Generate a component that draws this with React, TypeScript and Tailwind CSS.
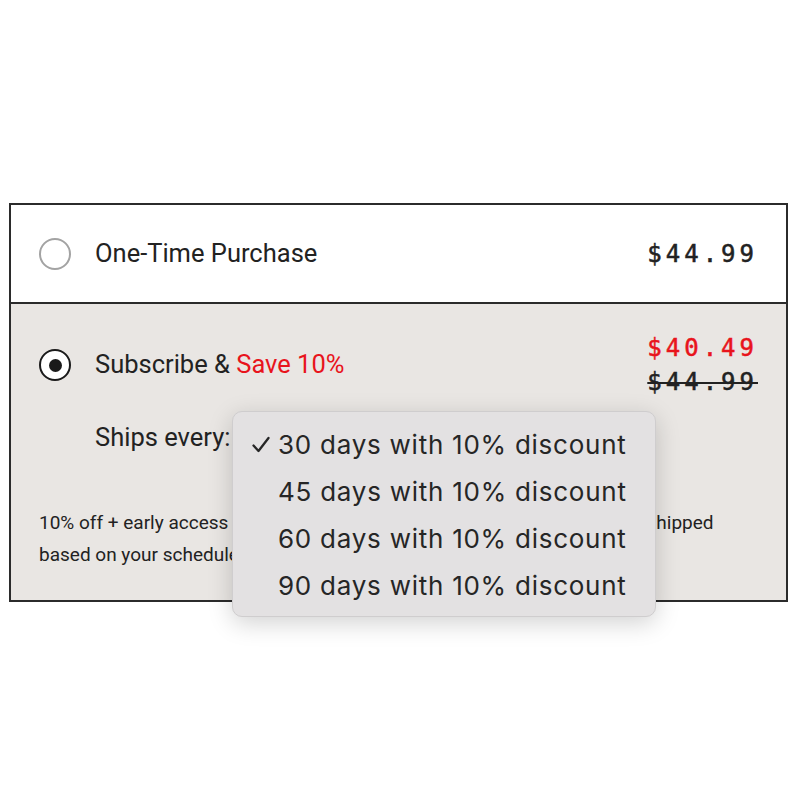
import React from 'react';

const options = [
  '30 days with 10% discount',
  '45 days with 10% discount',
  '60 days with 10% discount',
  '90 days with 10% discount',
];

export default function App() {
  return (
    <div className="min-h-[800px] w-[800px] bg-white pt-[203px]">
      <div className="ml-[9px] w-[779px] border-2 border-[#2b2b2b] font-['Roboto',sans-serif] text-[#222]">
        {/* one-time */}
        <div className="flex h-[97px] items-center justify-between pl-[28px] pr-[28px]">
          <div className="flex items-center gap-[24px]">
            <span className="h-[32px] w-[32px] rounded-full border-2 border-[#a3a3a3] bg-white" />
            <span className="text-[25.5px] leading-none">One-Time Purchase</span>
          </div>
          <span className="font-['DejaVu_Sans_Mono',monospace] text-[24px] tracking-[4px] [-webkit-text-stroke:0.5px_currentColor]">$44.99</span>
        </div>

        {/* subscribe */}
        <div className="relative border-t-2 border-[#2b2b2b] bg-[#e9e6e3] pl-[28px] pr-[28px] pt-[27px] pb-[29px]">
          <div className="flex items-center justify-between">
            <div className="flex items-center gap-[24px]">
              <span className="flex h-[32px] w-[32px] items-center justify-center rounded-full border-2 border-[#1a1a1a] bg-white">
                <span className="h-[13px] w-[13px] rounded-full bg-[#1a1a1a]" />
              </span>
              <span className="text-[25.5px] leading-none">
                Subscribe &amp; <span className="text-[#e8141c]">Save 10%</span>
              </span>
            </div>
            <div className="flex flex-col items-end font-['DejaVu_Sans_Mono',monospace] text-[24px] leading-[34px] tracking-[4px] [-webkit-text-stroke:0.5px_currentColor]">
              <span className="text-[#e8141c]">$40.49</span>
              <span className="line-through decoration-2">$44.99</span>
            </div>
          </div>

          <div className="mt-[22px] pl-[56px] text-[25.5px] leading-[32px]">Ships every:</div>

          <p className="mt-[54px] whitespace-nowrap text-[19px] leading-[32px]">
            10% off + early access to new flavors, free gifts &amp; perks. Your orders are shipped
            <br />
            based on your schedule and you can cancel anytime.
          </p>

          {/* native select popup */}
          <div className="absolute left-[221px] top-[107px] w-[424px] rounded-[10px] border border-[#cfcdce] bg-[#e3e1e2] pb-[7px] pt-[9px] font-['Inter',sans-serif] text-[26px] tracking-[0.75px] text-[#262626] shadow-[0_6px_24px_rgba(0,0,0,0.18)]">
            {options.map((o, i) => (
              <div key={o} className="flex h-[47px] items-center pl-[18px]">
                <span className="flex w-[27px] items-center">
                  {i === 0 && (
                    <svg width="20" height="20" viewBox="0 0 20 20" fill="none" stroke="#262626" strokeWidth="2.3" strokeLinecap="round" strokeLinejoin="round">
                      <path d="M2.5 10.5l5 5.5L17.5 3" />
                    </svg>
                  )}
                </span>
                <span>{o}</span>
              </div>
            ))}
          </div>
        </div>
      </div>
    </div>
  );
}
